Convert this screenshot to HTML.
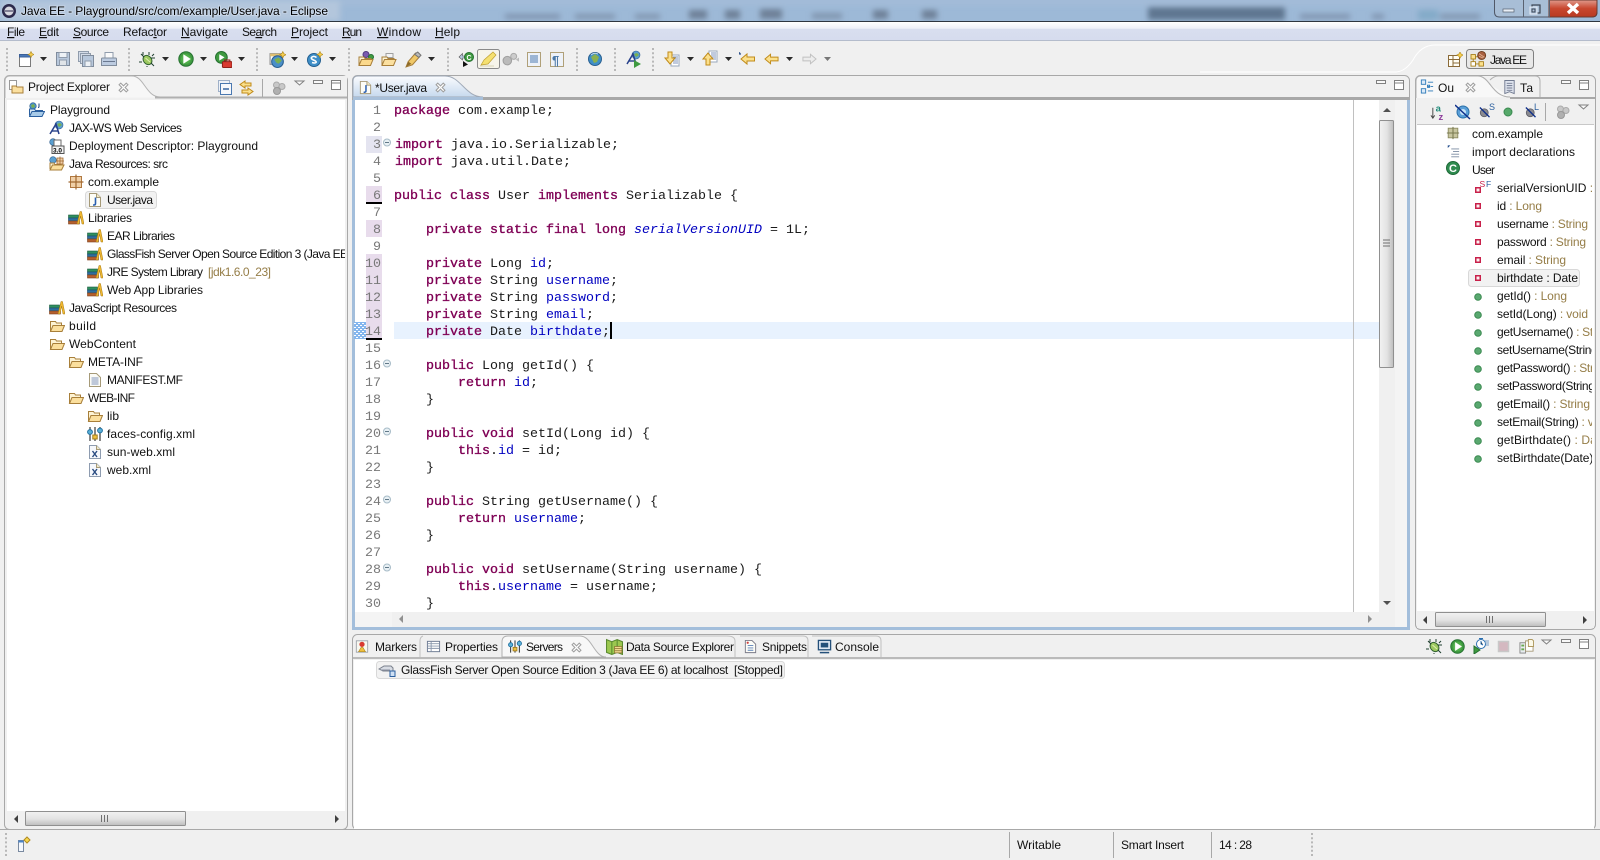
<!DOCTYPE html>
<html><head><meta charset="utf-8"><title>Java EE - Playground/src/com/example/User.java - Eclipse</title>
<style>
html,body{margin:0;padding:0;width:1600px;height:860px;overflow:hidden;background:#f0f0f0}
svg{display:block}
text{font-family:"Liberation Sans",sans-serif;font-size:12px;fill:#111;white-space:pre}
.c text,text.c{font-family:"Liberation Mono",monospace;font-size:13.33px;fill:#1a1a1a}
.k{fill:#7f0055;stroke:#7f0055;stroke-width:.35px}
.f{fill:#0000c0}
.s{fill:#0000c0;font-style:italic}
.n text{font-family:"Liberation Mono",monospace;font-size:13.33px;fill:#787878;text-anchor:end}
.d{fill:#957d47}
.u{text-decoration:underline}
</style></head><body>
<svg xmlns="http://www.w3.org/2000/svg" width="1600" height="860" viewBox="0 0 1600 860">
<defs>
<linearGradient id="menu" x1="0" y1="0" x2="0" y2="1"><stop offset="0" stop-color="#fff"/><stop offset=".35" stop-color="#eef0f8"/><stop offset=".4" stop-color="#d8deef"/><stop offset="1" stop-color="#d6dcee"/></linearGradient>
<linearGradient id="tabb" x1="0" y1="0" x2="0" y2="1"><stop offset="0" stop-color="#fbfcfe"/><stop offset="1" stop-color="#c6d9ee"/></linearGradient>
<linearGradient id="th" x1="0" y1="0" x2="0" y2="1"><stop offset="0" stop-color="#f2f2f2"/><stop offset=".55" stop-color="#e2e2e2"/><stop offset="1" stop-color="#bdbdbd"/></linearGradient>
<linearGradient id="tv" x1="0" y1="0" x2="1" y2="0"><stop offset="0" stop-color="#f2f2f2"/><stop offset=".55" stop-color="#e2e2e2"/><stop offset="1" stop-color="#bdbdbd"/></linearGradient>
<linearGradient id="cl" x1="0" y1="0" x2="0" y2="1"><stop offset="0" stop-color="#e09a8c"/><stop offset=".5" stop-color="#c8472f"/><stop offset="1" stop-color="#b83a22"/></linearGradient>
<filter id="bl"><feGaussianBlur stdDeviation="3"/></filter>
<clipPath id="cpo"><rect x="1417" y="125" width="175" height="485"/></clipPath>
<clipPath id="cpe"><rect x="7" y="100" width="338" height="711"/></clipPath>
<clipPath id="cpc"><rect x="354" y="100" width="1025" height="512"/></clipPath>
<clipPath id="cpt"><rect x="0" y="0" width="1600" height="21"/></clipPath>

<symbol id="folder" viewBox="0 0 16 16"><path d="M1.5 13V3.5h5l1 1.5h5v2.5" fill="#fdf3d4" stroke="#a87f3a"/><path d="M1.5 13.5l2.5-6h11.5l-2.5 6z" fill="#fbdf9d" stroke="#a87f3a"/></symbol>
<symbol id="lib" viewBox="0 0 16 16"><rect x="0.5" y="5" width="10" height="3" fill="#2f8f5f" stroke="#1d5f3f" stroke-width=".6"/><rect x="0.5" y="8" width="10" height="3" fill="#2e6f9f" stroke="#1a4a70" stroke-width=".6"/><rect x="0.5" y="11" width="11" height="3" fill="#b5602e" stroke="#7c3f1c" stroke-width=".6"/><path d="M9 14L12 1.5h1.5L16 14h-2l-1.5-8-1.5 8z" fill="#f0b830" stroke="#a87c18" stroke-width=".5"/></symbol>
<symbol id="jfile" viewBox="0 0 16 16"><path d="M2.5 1.5h7l4 4v9h-11z" fill="#fdfdf7" stroke="#a69a78"/><path d="M9.5 1.5v4h4" fill="#f0e8c8" stroke="#a69a78"/><path d="M8.5 5.5v6q0 1.5-1.5 1.5H6" fill="none" stroke="#2a5fb0" stroke-width="1.6"/></symbol>
<symbol id="xfile" viewBox="0 0 16 16"><path d="M2.5 1.5h7l4 4v9h-11z" fill="#f6f8fc" stroke="#8e9cb0"/><path d="M9.5 1.5v4h4" fill="#f0e8c8" stroke="#a69a78"/><path d="M5.5 7l4.5 6M10 7l-4.5 6" stroke="#284a80" stroke-width="1.4"/></symbol>
<symbol id="mf" viewBox="0 0 16 16"><path d="M2.5 1.5h7l4 4v9h-11z" fill="#fbfbf6" stroke="#a69a78"/><path d="M4.5 6h7M4.5 8h7M4.5 10h7M4.5 12h7" stroke="#8096bc"/></symbol>
<symbol id="pkg" viewBox="0 0 16 16"><rect x="2.5" y="2.5" width="11" height="11" fill="#f0d0a8" stroke="#b07840"/><path d="M8 0.5v15M0.5 8h15" stroke="#a06830" stroke-width="1.2"/></symbol>
<symbol id="proj" viewBox="0 0 16 16"><circle cx="4" cy="4" r="3.3" fill="#4a90c8" stroke="#2f5f90" stroke-width=".6"/><path d="M2 3l3-1 1 3-3 1z" fill="#7ab050"/><path d="M10 1.5v3q0 1-1 1" fill="none" stroke="#1a3f80"/><path d="M0.5 13.5V7h5l1 1.5h7v2" fill="#d8e8f6" stroke="#2a5f9f"/><path d="M0.5 14.5l2.5-5h12.5l-2.5 5z" fill="#a8cbe8" stroke="#2a5f9f"/></symbol>
<symbol id="jax" viewBox="0 0 16 16"><circle cx="10" cy="5" r="4" fill="#5a9fd0" stroke="#2f5f90" stroke-width=".6"/><path d="M8 4l3-1 2 2-3 2z" fill="#7ab050"/><path d="M1 14L7 4l3 10" fill="none" stroke="#27408a" stroke-width="1.5"/><path d="M3 11h6" stroke="#27408a" stroke-width="1.4"/></symbol>
<symbol id="dd" viewBox="0 0 16 16"><circle cx="4" cy="4" r="3.3" fill="#5a9fd0" stroke="#2f5f90" stroke-width=".6"/><rect x="5" y="2" width="7" height="7" fill="#fff" stroke="#6a6a6a"/><rect x="3" y="8" width="12" height="7.5" fill="#f4f4f4" stroke="#555"/><text x="4" y="14.5" style="font:bold 6.5px 'Liberation Sans',sans-serif;fill:#000">3.0</text></symbol>
<symbol id="jres" viewBox="0 0 16 16"><circle cx="4" cy="4" r="3.3" fill="#5a9fd0" stroke="#2f5f90" stroke-width=".6"/><path d="M1 13V7h4l1 1.5h6v2" fill="#fdf3d4" stroke="#a87f3a"/><path d="M1 14l2.5-5H15l-2.5 5z" fill="#fbdf9d" stroke="#a87f3a"/><path d="M8 2h6v6h-6zM11 0.5v8M7 5h8" fill="#f0d0a8" stroke="#a06830" stroke-width=".8"/></symbol>
<symbol id="faces" viewBox="0 0 16 16"><path d="M3 1v14M8 1v14M13 1v14" stroke="#3a3a3a" stroke-width="1.2"/><circle cx="3" cy="6" r="2.4" fill="#5ab0d8" stroke="#1f6f9f"/><rect x="5.8" y="9" width="4.4" height="4" fill="#f0c040" stroke="#a07c18"/><circle cx="13" cy="4.5" r="2.4" fill="#5ab0d8" stroke="#1f6f9f"/></symbol>
<symbol id="debug" viewBox="0 0 16 16"><ellipse cx="8.5" cy="9" rx="4" ry="5" transform="rotate(-40 8.5 9)" fill="#9cc860" stroke="#2f5f2f"/><path d="M5 6L2 3M12 12l3 3M3 11H0M8 15v1M13 5l2-2M10 1v3M12 7h4M4 4V1" stroke="#1f3f2f" stroke-width="1"/><path d="M6.5 7l4.5 4" stroke="#e0f0b0"/></symbol>
<symbol id="run" viewBox="0 0 16 16"><circle cx="8" cy="8" r="7.2" fill="#3f9a40" stroke="#257030"/><circle cx="8" cy="8" r="5" fill="#4fae4a"/><path d="M5.5 3.5L12.5 8l-7 4.5z" fill="#fff" stroke="#e6f5e0" stroke-width=".5"/></symbol>
<symbol id="ext" viewBox="0 0 16 16"><circle cx="6" cy="6" r="5.5" fill="#3f9a40" stroke="#257030"/><path d="M4 3l5 3-5 3z" fill="#fff"/><rect x="7" y="10" width="9" height="5.5" rx="1" fill="#d83a30" stroke="#902018"/><path d="M9 10V8.5h5V10" fill="none" stroke="#902018"/></symbol>
<symbol id="newf" viewBox="0 0 16 16"><rect x="1.5" y="3.5" width="11" height="12" fill="#fff" stroke="#7a7a7a"/><rect x="1.5" y="3.5" width="11" height="2.5" fill="#4a78b8" stroke="#3a5f98"/><path d="M13 0.5l1 2 2 1-2 1-1 2-1-2-2-1 2-1z" fill="#f8d050" stroke="#b08a20" stroke-width=".6"/></symbol>
<symbol id="save" viewBox="0 0 16 16"><rect x="1.5" y="1.5" width="13" height="13" fill="#b8c8dc" stroke="#808c9c"/><rect x="4" y="1.5" width="8" height="5" fill="#eef2f6" stroke="#909cac"/><rect x="4.5" y="9" width="7" height="5.5" fill="#e0e4e8" stroke="#909cac"/></symbol>
<symbol id="saveall" viewBox="0 0 16 16"><rect x="0.5" y="0.5" width="10" height="10" fill="#d4dce8" stroke="#909cac"/><rect x="2.5" y="2.5" width="10" height="10" fill="#d4dce8" stroke="#909cac"/><rect x="4.5" y="4.5" width="11" height="11" fill="#b8c8dc" stroke="#808c9c"/><rect x="7" y="10" width="6" height="5.5" fill="#eef2f6" stroke="#909cac"/></symbol>
<symbol id="print" viewBox="0 0 16 16"><rect x="4" y="1.5" width="8" height="6" fill="#fafafa" stroke="#909cac"/><path d="M0.5 14.5V8q0-1 1-1h13q1 0 1 1v6.5z" fill="#bccbe0" stroke="#808c9c"/><path d="M2 10.5h12" stroke="#6a7890"/></symbol>
<symbol id="web" viewBox="0 0 16 16"><rect x="1" y="2.5" width="11" height="10" fill="#fff" stroke="#888"/><rect x="1" y="2.5" width="11" height="2.5" fill="#e0c070"/><circle cx="8" cy="10" r="5.5" fill="#4a8fc8" stroke="#2a5f90"/><path d="M5 8l4-2 3 3-3 3-2-1z" fill="#7ab050"/><path d="M13 0.5l1 2 2 1-2 1-1 2-1-2-2-1 2-1z" fill="#f8d050" stroke="#b08a20" stroke-width=".6"/></symbol>
<symbol id="news" viewBox="0 0 16 16"><circle cx="7" cy="9" r="6.5" fill="#3f8fc8" stroke="#235f90"/><path d="M9.5 6.5q-2.5-2-4.5-.5t1.5 3 2.5 2.5-4 0" fill="none" stroke="#fff" stroke-width="1.5"/><path d="M13 0.5l1 2 2 1-2 1-1 2-1-2-2-1 2-1z" fill="#f8d050" stroke="#b08a20" stroke-width=".6"/></symbol>
<symbol id="opend" viewBox="0 0 16 16"><circle cx="8" cy="3.5" r="3" fill="#7a5ab0" stroke="#503a80"/><circle cx="13" cy="6" r="2.5" fill="#3f9a40" stroke="#257030"/><path d="M1 14V6h5l1 1.5h6v1" fill="#fdf3d4" stroke="#a87f3a"/><path d="M1 14.5l2.5-6H15l-2.5 6z" fill="#fbd98c" stroke="#a87f3a"/></symbol>
<symbol id="open2" viewBox="0 0 16 16"><rect x="5" y="2.5" width="7" height="4" fill="#f4f4f4" stroke="#a0a0a0"/><path d="M1 14V6h5l1 1.5h6v1" fill="#fdf3d4" stroke="#a87f3a"/><path d="M1 14.5l2.5-6H15l-2.5 6z" fill="#fbe0a0" stroke="#a87f3a"/></symbol>
<symbol id="pen" viewBox="0 0 16 16"><path d="M1 15l2-5 7-8 4 3-7 8z" fill="#f0c868" stroke="#a87f3a"/><path d="M9 3l4 3 2-2-3-3z" fill="#bbb" stroke="#777"/><path d="M1 15l2-5 3 2z" fill="#8c6a2a"/></symbol>
<symbol id="nav" viewBox="0 0 16 16"><path d="M1 6l3.5-3.5V5h5v2h-5v2z" fill="#b8c8e0" stroke="#555" stroke-width=".6"/><circle cx="11" cy="6" r="4.5" fill="#3f9a40" stroke="#257030"/><text x="8.5" y="9" style="font:bold 7px 'Liberation Sans',sans-serif;fill:#fff">C</text><path d="M5 10l5 3.5-5 2.5z" fill="#111"/></symbol>
<symbol id="globe" viewBox="0 0 16 16"><circle cx="8" cy="8" r="6.5" fill="#3f8fc8" stroke="#2a5f90"/><path d="M4 6l4-3 4 3-2 5-3 1z" fill="#8ab050"/><path d="M4 4q3-3 7-1" stroke="#fff" fill="none" stroke-opacity=".7"/></symbol>
<symbol id="nextann" viewBox="0 0 16 16"><rect x="7" y="4" width="8" height="11" fill="#fff" stroke="#9aa8bc"/><path d="M9 6h5M9 8h5M9 10h5M9 12h5" stroke="#8096bc"/><path d="M4 1h4v6h3l-5 6-5-6h3z" fill="#fbe08c" stroke="#c08a18"/></symbol>
<symbol id="prevann" viewBox="0 0 16 16"><rect x="7" y="1" width="8" height="11" fill="#fff" stroke="#9aa8bc"/><path d="M9 3h5M9 5h5M9 7h5M9 9h5" stroke="#8096bc"/><path d="M4 15h4V9h3L6 3 1 9h3z" fill="#fbe08c" stroke="#c08a18"/></symbol>
<symbol id="bk" viewBox="0 0 16 16"><path d="M1 8l6-5v3h8v4H7v3z" fill="#fbe08c" stroke="#c08a18"/></symbol>
<symbol id="bkl" viewBox="0 0 16 16"><path d="M2 8l6-5v3h7.5v4H8v3z" fill="#fbe08c" stroke="#c08a18"/><text x="-1" y="7" style="font:bold 8px 'Liberation Sans',sans-serif;fill:#2a4f8a">*</text></symbol>
<symbol id="fw" viewBox="0 0 16 16"><path d="M15 8L9 3v3H1v4h8v3z" fill="#ececec" stroke="#c0c0c0"/></symbol>
<symbol id="gray" viewBox="0 0 16 16"><circle cx="5.5" cy="5" r="3" fill="#c8c8c8" stroke="#aaa"/><circle cx="11" cy="6.5" r="3" fill="#c8c8c8" stroke="#aaa"/><circle cx="6" cy="11" r="3.5" fill="#b0b0b0" stroke="#999"/></symbol>
<symbol id="grayb" viewBox="0 0 16 16"><circle cx="5" cy="10" r="4" fill="#bbb" stroke="#a0a0a0"/><circle cx="11" cy="6" r="2.8" fill="#ccc" stroke="#aaa"/><path d="M13 9l3-2v4z" fill="#bbb"/></symbol>
<symbol id="collapse" viewBox="0 0 16 16"><rect x="1.5" y="0.5" width="11" height="11" fill="#eef2f8" stroke="#9fb0c8"/><rect x="3.5" y="3.5" width="11" height="11" fill="#f6f8fc" stroke="#4a78b0"/><path d="M6 9h6" stroke="#2a5a9a" stroke-width="1.4"/></symbol>
<symbol id="link" viewBox="0 0 17 16"><path d="M7 1L2 4.5 7 8V6h6V3H7z" fill="#fbe08c" stroke="#c08a18"/><path d="M10 8l5 3.5-5 3.5v-2H4v-3h6z" fill="#fbe08c" stroke="#c08a18"/></symbol>
<symbol id="outl" viewBox="0 0 16 16"><rect x="1.5" y="0.5" width="5" height="5" fill="#dceaf8" stroke="#2a78b8"/><rect x="1.5" y="10.5" width="5" height="5" fill="#dceaf8" stroke="#2a78b8"/><path d="M9 3h6M9 8h2M12 8h3M9 13h6" stroke="#2a78b8"/><rect x="8.5" y="6.5" width="2.5" height="2.5" fill="none" stroke="#2a78b8"/></symbol>
<symbol id="task" viewBox="0 0 16 16"><path d="M3 0.5h10v14l-5-2-5 2z" fill="#dfe4ee" stroke="#707a90"/><path d="M5 3.5h6M5 6h6M5 8.5h6M5 11h6" stroke="#707a90"/></symbol>
<symbol id="openp" viewBox="0 0 16 16"><rect x="1.5" y="3.5" width="11" height="11" fill="#fffdf4" stroke="#8a6a38"/><path d="M1.5 7.5h11M6 3.5v11M6 11h6.5" stroke="#8a6a38"/><path d="M13 0l1.2 2 2 1-2 1.2-1.2 2-1.2-2-2-1.2 2-1z" fill="#f8d050" stroke="#b08a20" stroke-width=".6"/></symbol>
<symbol id="jee" viewBox="0 0 20 18"><rect x="1" y="4" width="5" height="5" fill="#fbe08c" stroke="#a87f18"/><rect x="1" y="12" width="5" height="5" fill="#fff" stroke="#a87f18"/><rect x="10" y="12" width="5" height="5" fill="#fbe08c" stroke="#a87f18"/><path d="M3.5 9v3M6 14.5h4M6 6.5h3" stroke="#a87f18"/><circle cx="13" cy="5" r="4.5" fill="#a86040" stroke="#6a3818"/><path d="M10 3l6 4M10 6l5 2" stroke="#e0b090"/></symbol>
<symbol id="az" viewBox="0 0 18 18"><path d="M3 4v11M1 12l2 3 2-3" fill="none" stroke="#444"/><text x="6" y="8" style="font:bold 10px 'Liberation Sans',sans-serif;fill:#1f8a7a">a</text><text x="9" y="17" style="font:bold 10px 'Liberation Sans',sans-serif;fill:#8a3a9a">z</text></symbol>
<symbol id="hidef" viewBox="0 0 16 16"><circle cx="8" cy="8" r="6" fill="#5a9fd8" stroke="#2a6fa8"/><circle cx="8" cy="8" r="3" fill="#c8e4f8"/><path d="M0 1L15 15" stroke="#10308a" stroke-width="1.5"/></symbol>
<symbol id="hides" viewBox="0 0 16 16"><circle cx="6" cy="10" r="4.5" fill="#8a8a90" stroke="#606068"/><path d="M1 4l11 11" stroke="#10308a" stroke-width="1.5"/></symbol>
<symbol id="mk" viewBox="0 0 16 16"><rect x="1.5" y="1.5" width="13" height="13" fill="#f8f8f0" stroke="#9aa0a8"/><circle cx="8" cy="5.5" r="3" fill="#d83a30"/><path d="M4 14l3-5h2l3 5z" fill="#f0c040" stroke="#a07c18" stroke-width=".6"/></symbol>
<symbol id="props" viewBox="0 0 16 16"><rect x="1.5" y="2.5" width="13" height="11" fill="#fff" stroke="#6a7890"/><path d="M1.5 5h13M1.5 7.5h13M1.5 10h13M5.5 2.5v11" stroke="#8a98ac"/></symbol>
<symbol id="dse" viewBox="0 0 16 16"><path d="M0.5 1.5l5 2 5-2 5 2v12l-5-2-5 2-5-2z" fill="#9cc850" stroke="#5a8a30"/><path d="M5.5 3.5v12M10.5 1.5v12" stroke="#5a8a30"/><path d="M8 8h7v6H8zM8 10h7M8 12h7" fill="#f0d890" stroke="#8a7030" stroke-width=".7"/></symbol>
<symbol id="snip" viewBox="0 0 16 16"><path d="M2.5 1.5h7l4 4v9h-11z" fill="#fdfdf7" stroke="#7a7a88"/><path d="M5 7h6M5 9.5h6M5 12h6" stroke="#5a80b8"/><circle cx="5" cy="4" r="1.2" fill="#d04040"/></symbol>
<symbol id="cons" viewBox="0 0 16 16"><rect x="1.5" y="1.5" width="13" height="10" fill="#dfe8f4" stroke="#24507a" stroke-width="1.4"/><rect x="4" y="4" width="8" height="5" fill="#24507a"/><path d="M3 14.5h10" stroke="#24507a" stroke-width="1.6"/></symbol>
<symbol id="srv" viewBox="0 0 18 16"><path d="M1 7l5-3h7l2 2v3H5z" fill="#d8dce4" stroke="#7a808c"/><path d="M3 8h9" stroke="#8a90a0"/><rect x="12" y="9" width="5" height="5.5" fill="#cfe0f4" stroke="#2a5f9f"/></symbol>
<symbol id="pub" viewBox="0 0 16 16"><circle cx="8" cy="6" r="4.5" fill="#fff" stroke="#2a6fb0"/><path d="M8 3v3l2 1M6 0.5h4" stroke="#2a6fb0"/><path d="M12 3h4M12 5h4M13 7h3" stroke="#7aa0c8"/><path d="M1 8l6 4-6 4z" fill="#3f9a40" stroke="#257030"/></symbol>
<symbol id="pub2" viewBox="0 0 16 16"><rect x="1" y="4" width="6" height="11" fill="#e8ecf0" stroke="#888"/><rect x="2.5" y="6" width="3" height="2" fill="#6aa84f"/><rect x="2.5" y="10" width="3" height="2" fill="#6aa84f"/><path d="M7 2h6l2 2v9H7z" fill="#fff" stroke="#a89a78"/><path d="M10 0.5h4l1.5 1.5v6H10z" fill="#fbf8e8" stroke="#b09a60"/></symbol>
<symbol id="fast" viewBox="0 0 16 16"><rect x="1.5" y="4.5" width="5" height="11" fill="#f4f8fe" stroke="#7a8aa0"/><rect x="1.5" y="4.5" width="5" height="2" fill="#4a84c8"/><path d="M10 1l3 3-3 3-3-3z" fill="#f8d850" stroke="#b08a20"/></symbol>
<symbol id="impd" viewBox="0 0 16 16"><path d="M2 4V1h3z" fill="#1f4a8a"/><path d="M6 5h9M8 8h7M6 11h9M6 14h9" stroke="#7a8aa0"/></symbol>
<symbol id="pko" viewBox="0 0 16 16"><rect x="2.5" y="2.5" width="11" height="11" fill="#c8c6a0" stroke="#8a8a60"/><path d="M8 1v14M1 8h14" stroke="#7a7a50" stroke-width="1.2"/></symbol>
<symbol id="x" viewBox="0 0 10 10"><path d="M1 2.5L2.5 1 5 3.5 7.5 1 9 2.5 6.5 5 9 7.5 7.5 9 5 6.5 2.5 9 1 7.5 3.5 5z" fill="#fff" stroke="#a0a0a0"/></symbol>
</defs>

<!-- title bar -->
<rect x="0" y="0" width="1600" height="22" fill="#9db9d7"/>
<g clip-path="url(#cpt)">
<g filter="url(#bl)">
<rect x="0" y="0" width="340" height="21" fill="#b3c6dc"/>
<rect x="340" y="0" width="1160" height="4" fill="#a7bdd8"/>
<rect x="505" y="14" width="55" height="5" fill="#7f93ae"/>
<rect x="575" y="14" width="40" height="5" fill="#8094ae"/>
<rect x="635" y="14" width="25" height="5" fill="#8094ae"/>
<rect x="689" y="10" width="18" height="9" fill="#6e8097"/>
<rect x="725" y="10" width="15" height="9" fill="#6e8097"/>
<rect x="760" y="9" width="22" height="10" fill="#6e8097"/>
<rect x="812" y="13" width="30" height="6" fill="#8094ae"/>
<rect x="873" y="10" width="15" height="9" fill="#6e8097"/>
<rect x="922" y="10" width="15" height="9" fill="#6e8097"/>
<rect x="1148" y="7" width="137" height="13" fill="#5f7690"/>
<rect x="1300" y="14" width="50" height="5" fill="#7f93ae"/>
<rect x="1372" y="14" width="12" height="5" fill="#7f93ae"/>
<rect x="1418" y="10" width="20" height="10" fill="#83aac8"/>
<rect x="1440" y="14" width="40" height="5" fill="#8094ae"/>
</g>
</g>
<path d="M1494.5 0V12q0 5 5 5H1592q5 0 5-5V0" fill="#a8bed6" stroke="#505868"/>
<path d="M1549 0h48V12q0 5-5 5h-43z" fill="url(#cl)" stroke="#6a3a30"/>
<path d="M1523.5 0v17M1549.5 0v17" stroke="#5a6270"/>
<rect x="1503" y="9" width="11" height="3" fill="#e8eef6" stroke="#56606e" stroke-width=".7"/>
<rect x="1532" y="5" width="8" height="8" fill="none" stroke="#3a4452" stroke-width="1.2"/><rect x="1530" y="7" width="7" height="7" fill="#b0c4dc" stroke="#e8eef6"/><rect x="1532" y="9" width="3" height="3" fill="none" stroke="#3a4452"/>
<path d="M1568 4l10 9M1578 4l-10 9" stroke="#fff" stroke-width="3.4"/>
<circle cx="9" cy="11" r="7" fill="#2c2a4c"/><circle cx="9" cy="11" r="4.5" fill="#d8d8e0"/><path d="M5 11h8" stroke="#2c2a4c" stroke-width="1"/>
<text x="21" y="15" textLength="307" lengthAdjust="spacing" style="fill:#000;paint-order:stroke;stroke:#d8e4f0;stroke-width:2px;stroke-opacity:.55">Java EE - Playground/src/com/example/User.java - Eclipse</text>
<rect x="0" y="21" width="1600" height="1" fill="#2e3640"/>

<!-- menu -->
<rect x="0" y="22" width="1600" height="18" fill="url(#menu)"/>
<rect x="0" y="40" width="1600" height="1" fill="#b4bccc"/>
<g>
<text x="7" y="36" textLength="18"><tspan class="u">F</tspan>ile</text>
<text x="39" y="36" textLength="20"><tspan class="u">E</tspan>dit</text>
<text x="73" y="36" textLength="36"><tspan class="u">S</tspan>ource</text>
<text x="123" y="36" textLength="44">Refac<tspan class="u">t</tspan>or</text>
<text x="181" y="36" textLength="47"><tspan class="u">N</tspan>avigate</text>
<text x="242" y="36" textLength="35">Se<tspan class="u">a</tspan>rch</text>
<text x="291" y="36" textLength="37"><tspan class="u">P</tspan>roject</text>
<text x="342" y="36" textLength="20"><tspan class="u">R</tspan>un</text>
<text x="377" y="36" textLength="44"><tspan class="u">W</tspan>indow</text>
<text x="435" y="36" textLength="25"><tspan class="u">H</tspan>elp</text>
</g>

<!-- toolbar -->
<rect x="0" y="41" width="1600" height="34" fill="#f0f0f0"/>
<g stroke="#b8b8b8" stroke-width="2" stroke-dasharray="2 2.2" fill="none">
<path d="M7 48v23M129 48v23M257 48v23M349 48v23M448 48v23M577 48v23M615 48v23M653 48v23"/>
</g>
<use href="#newf" x="18" y="51" width="16" height="16"/>
<use href="#save" x="55" y="51" width="16" height="16"/>
<use href="#saveall" x="78" y="51" width="16" height="16"/>
<use href="#print" x="101" y="51" width="16" height="16"/>
<use href="#debug" x="139" y="51" width="16" height="16"/>
<use href="#run" x="178" y="51" width="16" height="16"/>
<use href="#ext" x="215" y="51" width="17" height="17"/>
<use href="#web" x="269" y="51" width="17" height="17"/>
<use href="#news" x="307" y="51" width="16" height="16"/>
<use href="#opend" x="358" y="51" width="16" height="16"/>
<use href="#open2" x="381" y="51" width="16" height="16"/>
<use href="#pen" x="405" y="51" width="17" height="17"/>
<use href="#nav" x="458" y="51" width="16" height="16"/>
<rect x="477.5" y="49.5" width="22" height="19" rx="2" fill="#f6f4ea" stroke="#8a8a8a"/>
<path d="M481 65l3-5 9-8 3 3-8 9z" fill="#f5e070" stroke="#c0a030" stroke-width=".7"/><path d="M480 66h14" stroke="#d8d4b8"/>
<use href="#grayb" x="502" y="50" width="17" height="17"/>
<rect x="527.5" y="52.5" width="13" height="14" fill="#eef2f8" stroke="#b0a078"/><path d="M530 56h8M530 58h8M530 60h8M530 62h8" stroke="#4a78b0"/>
<rect x="550.5" y="52.5" width="13" height="14" fill="#eef2f8" stroke="#b0a078"/><text x="552" y="65" style="font:bold 13px 'Liberation Sans',sans-serif;fill:#4a78a8">¶</text>
<use href="#globe" x="587" y="51" width="16" height="16"/>
<use href="#jax" x="626" y="50" width="16" height="16"/><path d="M634 60l7 4-7 4z" fill="#3f9a40"/>
<use href="#nextann" x="664" y="51" width="16" height="16"/>
<use href="#prevann" x="702" y="50" width="16" height="16"/>
<use href="#bkl" x="739" y="51" width="16" height="16"/>
<use href="#bk" x="764" y="51" width="15" height="16"/>
<use href="#fw" x="802" y="51" width="15" height="16"/>
<g fill="#2a2a2a">
<path d="M40 57h7l-3.5 4zM162 57h7l-3.5 4zM200 57h7l-3.5 4zM238 57h7l-3.5 4zM291 57h7l-3.5 4zM329 57h7l-3.5 4zM428 57h7l-3.5 4zM687 57h7l-3.5 4zM725 57h7l-3.5 4zM786 57h7l-3.5 4z"/>
<path d="M824 57h7l-3.5 4z" fill="#777"/>
</g>
<!-- perspective -->
<path d="M1200 72H1395q10 0 18-12q8-15 22-15H1600" fill="none" stroke="#fff" stroke-width="1"/>
<use href="#openp" x="1447" y="52" width="16" height="16"/>
<rect x="1466.5" y="49.5" width="67" height="19" rx="3" fill="#e8e8e8" stroke="#808080"/>
<use href="#jee" x="1470" y="51" width="18" height="16"/>
<text x="1490" y="64" textLength="37">Java EE</text>

<!-- project explorer -->
<rect x="4.5" y="75.5" width="343" height="754" rx="5" fill="#f0f0f0" stroke="#a8a8a8"/>
<path d="M5 98V81q0-5 5-5H132c12 0 14 21 28 21H347" fill="#f7f7f7" stroke="#b4b4b4"/>
<rect x="160" y="76" width="187" height="21" fill="#f0f0f0"/>
<path d="M155 97.5H347" stroke="#b0b0b0" stroke-width="2"/>
<rect x="7" y="100" width="338" height="711" fill="#fff"/>
<g><path d="M10 84h5l1 1.5v-4h-6z" fill="#fff"/><rect x="9.5" y="80.5" width="7" height="9" fill="#fff" stroke="#999"/><path d="M12 89V86h4l1 1h6v6H12z" fill="#fbe0a0" stroke="#a87f3a"/></g>
<text x="28" y="91" textLength="82">Project Explorer</text>
<use href="#x" x="118" y="82" width="11" height="11"/>
<use href="#collapse" x="217" y="80" width="16" height="16"/>
<use href="#link" x="238" y="80" width="17" height="16"/>
<path d="M262.5 79v18" stroke="#a8a8a8"/>
<use href="#gray" x="271" y="80" width="16" height="16"/>
<path d="M295 81h9l-4.5 4z" fill="#f8f8f8" stroke="#808080"/>
<rect x="313.5" y="80.5" width="9" height="3" fill="#f8f8f8" stroke="#808080"/>
<rect x="331.5" y="80.5" width="9" height="9" fill="#fff" stroke="#808080"/><path d="M331 83h10" stroke="#808080"/>

<g clip-path="url(#cpe)">
<rect x="85.5" y="191.5" width="71" height="17" rx="3" fill="#f2f2f2" stroke="#d8d8d8"/>
<use href="#proj" x="29" y="102" width="16" height="16"/><text x="50" y="114" textLength="60">Playground</text>
<use href="#jax" x="49" y="120" width="16" height="16"/><text x="69" y="132" textLength="113">JAX-WS Web Services</text>
<use href="#dd" x="49" y="138" width="16" height="16"/><text x="69" y="150" textLength="189">Deployment Descriptor: Playground</text>
<use href="#jres" x="49" y="156" width="16" height="16"/><text x="69" y="168" textLength="99">Java Resources: src</text>
<use href="#pkg" x="68" y="174" width="16" height="16"/><text x="88" y="186" textLength="71">com.example</text>
<use href="#jfile" x="87" y="192" width="16" height="16"/><text x="107" y="204" textLength="46">User.java</text>
<use href="#lib" x="68" y="210" width="16" height="16"/><text x="88" y="222" textLength="44">Libraries</text>
<use href="#lib" x="87" y="228" width="16" height="16"/><text x="107" y="240" textLength="68">EAR Libraries</text>
<use href="#lib" x="87" y="246" width="16" height="16"/><text x="107" y="258" textLength="241">GlassFish Server Open Source Edition 3 (Java EE</text>
<use href="#lib" x="87" y="264" width="16" height="16"/><text x="107" y="276" textLength="96">JRE System Library</text><text x="208" y="276" textLength="63" class="d">[jdk1.6.0_23]</text>
<use href="#lib" x="87" y="282" width="16" height="16"/><text x="107" y="294" textLength="96">Web App Libraries</text>
<use href="#lib" x="49" y="300" width="16" height="16"/><text x="69" y="312" textLength="108">JavaScript Resources</text>
<use href="#folder" x="49" y="318" width="16" height="16"/><text x="69" y="330" textLength="27">build</text>
<use href="#folder" x="49" y="336" width="16" height="16"/><text x="69" y="348" textLength="67">WebContent</text>
<use href="#folder" x="68" y="354" width="16" height="16"/><text x="88" y="366" textLength="55">META-INF</text>
<use href="#mf" x="87" y="372" width="16" height="16"/><text x="107" y="384" textLength="76">MANIFEST.MF</text>
<use href="#folder" x="68" y="390" width="16" height="16"/><text x="88" y="402" textLength="47">WEB-INF</text>
<use href="#folder" x="87" y="408" width="16" height="16"/><text x="107" y="420" textLength="12">lib</text>
<use href="#faces" x="87" y="426" width="16" height="16"/><text x="107" y="438" textLength="88">faces-config.xml</text>
<use href="#xfile" x="87" y="444" width="16" height="16"/><text x="107" y="456" textLength="68">sun-web.xml</text>
<use href="#xfile" x="87" y="462" width="16" height="16"/><text x="107" y="474" textLength="44">web.xml</text>
</g>
<rect x="7" y="811" width="338" height="16" fill="#f0f0f0"/>
<rect x="25.5" y="811.5" width="160" height="14" rx="1" fill="url(#th)" stroke="#909090"/>
<path d="M101.5 815v7M104.5 815v7M107.5 815v7" stroke="#707070"/>
<path d="M18 815v8l-4-4z" fill="#404040"/><path d="M335 815v8l4-4z" fill="#404040"/>

<!-- editor -->
<rect x="352.5" y="75.5" width="1057" height="553" rx="5" fill="#f0f0f0" stroke="#a8a8a8"/>
<path d="M353 97V81q0-5 5-5H445c16 0 20 21 38 21z" fill="url(#tabb)" stroke="#a0aab8"/>
<path d="M483 98.5H1409" stroke="#a8a8a8" stroke-width="3"/>
<path d="M353 98.5H483" stroke="#a8c0da" stroke-width="3"/>
<rect x="352" y="100" width="3" height="530" fill="#a3bedb"/>
<rect x="1407" y="100" width="3" height="530" fill="#a3bedb"/>
<rect x="352" y="627" width="1058" height="3" fill="#a3bedb"/>
<rect x="355" y="100" width="1052" height="527" fill="#fff"/>
<use href="#jfile" x="358" y="80" width="15" height="15"/>
<text x="375" y="92" textLength="52">*User.java</text>
<use href="#x" x="435" y="82" width="11" height="11"/>
<rect x="1376.5" y="80.5" width="9" height="3" fill="#f8f8f8" stroke="#808080"/>
<rect x="1394.5" y="80.5" width="9" height="9" fill="#fff" stroke="#808080"/><path d="M1394 83h10" stroke="#808080"/>

<!-- gutter -->
<rect x="366" y="136" width="16" height="17" fill="#e4e4f0"/>
<rect x="366" y="186" width="16" height="17" fill="#e8dcec"/>
<rect x="366" y="220" width="16" height="17" fill="#e8dcec"/>
<rect x="366" y="254" width="16" height="85" fill="#e8dcec"/>
<rect x="366" y="202" width="16" height="2" fill="#000"/>
<rect x="366" y="338" width="16" height="2" fill="#000"/>
<rect x="354" y="322" width="12" height="17" fill="#84b6ee"/>
<g fill="#fff"><path d="M354 323h2v1h-2zM356 325h2v1h-2zM358 323h2v1h-2zM360 325h2v1h-2zM362 323h2v1h-2zM364 325h2v1h-2zM354 327h2v1h-2zM356 329h2v1h-2zM358 327h2v1h-2zM360 329h2v1h-2zM362 327h2v1h-2zM364 329h2v1h-2zM354 331h2v1h-2zM356 333h2v1h-2zM358 331h2v1h-2zM360 333h2v1h-2zM362 331h2v1h-2zM364 333h2v1h-2zM354 335h2v1h-2zM356 337h2v1h-2zM358 335h2v1h-2zM360 337h2v1h-2zM362 335h2v1h-2zM364 337h2v1h-2z"/></g>
<g class="n">
<text x="381" y="114">1</text><text x="381" y="131">2</text><text x="381" y="148">3</text><text x="381" y="165">4</text><text x="381" y="182">5</text><text x="381" y="199">6</text><text x="381" y="216">7</text><text x="381" y="233">8</text><text x="381" y="250">9</text><text x="381" y="267">10</text><text x="381" y="284">11</text><text x="381" y="301">12</text><text x="381" y="318">13</text><text x="381" y="335">14</text><text x="381" y="352">15</text><text x="381" y="369">16</text><text x="381" y="386">17</text><text x="381" y="403">18</text><text x="381" y="420">19</text><text x="381" y="437">20</text><text x="381" y="454">21</text><text x="381" y="471">22</text><text x="381" y="488">23</text><text x="381" y="505">24</text><text x="381" y="522">25</text><text x="381" y="539">26</text><text x="381" y="556">27</text><text x="381" y="573">28</text><text x="381" y="590">29</text><text x="381" y="607">30</text>
</g>
<g fill="#e8f0f4" stroke="#a8bcc8">
<circle cx="387" cy="142.5" r="3.5"/><circle cx="387" cy="363.5" r="3.5"/><circle cx="387" cy="431.5" r="3.5"/><circle cx="387" cy="499.5" r="3.5"/><circle cx="387" cy="567.5" r="3.5"/>
</g>
<path d="M385 142.5h4M385 363.5h4M385 431.5h4M385 499.5h4M385 567.5h4" stroke="#607888"/>
<rect x="394" y="322" width="985" height="17" fill="#e8f2fe"/>
<rect x="1353" y="100" width="1" height="512" fill="#c0c0c0"/>
<g class="c" clip-path="url(#cpc)">
<text x="394" y="114" xml:space="preserve"><tspan class="k">package</tspan> com.example;</text>
<text x="395" y="148" xml:space="preserve"><tspan class="k">import</tspan> java.io.Serializable;</text>
<text x="395" y="165" xml:space="preserve"><tspan class="k">import</tspan> java.util.Date;</text>
<text x="394" y="199" xml:space="preserve"><tspan class="k">public</tspan> <tspan class="k">class</tspan> User <tspan class="k">implements</tspan> Serializable {</text>
<text x="426" y="233" xml:space="preserve"><tspan class="k">private</tspan> <tspan class="k">static</tspan> <tspan class="k">final</tspan> <tspan class="k">long</tspan> <tspan class="s">serialVersionUID</tspan> = 1L;</text>
<text x="426" y="267" xml:space="preserve"><tspan class="k">private</tspan> Long <tspan class="f">id</tspan>;</text>
<text x="426" y="284" xml:space="preserve"><tspan class="k">private</tspan> String <tspan class="f">username</tspan>;</text>
<text x="426" y="301" xml:space="preserve"><tspan class="k">private</tspan> String <tspan class="f">password</tspan>;</text>
<text x="426" y="318" xml:space="preserve"><tspan class="k">private</tspan> String <tspan class="f">email</tspan>;</text>
<text x="426" y="335" xml:space="preserve"><tspan class="k">private</tspan> Date <tspan class="f">birthdate</tspan>;</text>
<text x="426" y="369" xml:space="preserve"><tspan class="k">public</tspan> Long getId() {</text>
<text x="458" y="386" xml:space="preserve"><tspan class="k">return</tspan> <tspan class="f">id</tspan>;</text>
<text x="426" y="403">}</text>
<text x="426" y="437" xml:space="preserve"><tspan class="k">public</tspan> <tspan class="k">void</tspan> setId(Long id) {</text>
<text x="458" y="454" xml:space="preserve"><tspan class="k">this</tspan>.<tspan class="f">id</tspan> = id;</text>
<text x="426" y="471">}</text>
<text x="426" y="505" xml:space="preserve"><tspan class="k">public</tspan> String getUsername() {</text>
<text x="458" y="522" xml:space="preserve"><tspan class="k">return</tspan> <tspan class="f">username</tspan>;</text>
<text x="426" y="539">}</text>
<text x="426" y="573" xml:space="preserve"><tspan class="k">public</tspan> <tspan class="k">void</tspan> setUsername(String username) {</text>
<text x="458" y="590" xml:space="preserve"><tspan class="k">this</tspan>.<tspan class="f">username</tspan> = username;</text>
<text x="426" y="607">}</text>
</g>
<rect x="610" y="322" width="2" height="17" fill="#000"/>
<!-- editor scrollbars -->
<rect x="1379" y="100" width="16" height="512" fill="#f0f0f0"/>
<rect x="1395" y="100" width="12" height="527" fill="#f4f4f4"/>
<rect x="392" y="612" width="1003" height="15" fill="#f0f0f0"/>
<rect x="355" y="612" width="37" height="15" fill="#f4f4f4"/>
<rect x="1379.5" y="120.5" width="14" height="247" rx="1" fill="url(#tv)" stroke="#909090"/>
<path d="M1383 240h7M1383 243h7M1383 246h7" stroke="#707070"/>
<path d="M1383 112h8l-4-4z" fill="#505050"/><path d="M1383 601h8l-4 4z" fill="#505050"/>
<path d="M403 615v8l-4-4z" fill="#909090"/><path d="M1368 615v8l4-4z" fill="#909090"/>

<!-- outline -->
<rect x="1415.5" y="75.5" width="180" height="554" rx="5" fill="#f0f0f0" stroke="#a8a8a8"/>
<path d="M1416 98V81q0-5 5-5H1478c12 0 14 21 32 21" fill="#f8f8f8" stroke="#b0b0b0"/>
<path d="M1490 80q4-4 8-4H1535q5 0 5 5v16" fill="#f0f0f0" stroke="#b0b0b0"/>
<path d="M1480 78c10 0 14 19 30 19z" fill="#f8f8f8"/>
<path d="M1478 76c12 0 14 21 32 21" fill="none" stroke="#b0b0b0"/>
<path d="M1510 98H1595" stroke="#a8a8a8" stroke-width="2"/>
<rect x="1417" y="125" width="177" height="486" fill="#fff"/>
<path d="M1417 124.5H1594" stroke="#c8c8c8"/>
<use href="#outl" x="1420" y="79" width="14" height="15"/>
<text x="1438" y="92" textLength="16">Ou</text>
<use href="#x" x="1465" y="82" width="11" height="11"/>
<use href="#task" x="1502" y="80" width="15" height="15"/>
<text x="1520" y="92" textLength="13">Ta</text>
<rect x="1561.5" y="80.5" width="9" height="3" fill="#f8f8f8" stroke="#808080"/>
<rect x="1579.5" y="80.5" width="9" height="9" fill="#fff" stroke="#808080"/><path d="M1579 83h10" stroke="#808080"/>
<use href="#az" x="1430" y="104" width="17" height="17"/>
<use href="#hidef" x="1455" y="104" width="16" height="16"/>
<use href="#hides" x="1479" y="104" width="14" height="14"/><text x="1489" y="110" style="font-size:9px;fill:#2a5f9f">S</text>
<circle cx="1508" cy="112" r="4" fill="#56a86a" stroke="#3a8a50"/>
<use href="#hides" x="1525" y="104" width="14" height="14"/><text x="1534" y="110" style="font-size:9px;fill:#2a5f9f">L</text>
<path d="M1545.5 103v18" stroke="#a8a8a8"/>
<use href="#gray" x="1555" y="104" width="16" height="16"/>
<path d="M1579 105h9l-4.5 4z" fill="#f8f8f8" stroke="#808080"/>

<rect x="1468.5" y="269.5" width="111" height="17" rx="3" fill="#f2f2f2" stroke="#d8d8d8"/>
<use href="#pko" x="1446" y="126" width="14" height="14"/>
<use href="#impd" x="1446" y="144" width="14" height="15"/>
<circle cx="1453" cy="168" r="6.5" fill="#2e8b4f" stroke="#1f6a38"/><text x="1449" y="172" style="font:bold 11px 'Liberation Sans',sans-serif;fill:#fff">C</text>
<g clip-path="url(#cpo)">
<text x="1472" y="138" textLength="71">com.example</text>
<text x="1472" y="156" textLength="103">import declarations</text>
<text x="1472" y="174" textLength="23">User</text>
<text x="1497" y="192">serialVersionUID<tspan class="d"> : long</tspan></text>
<text x="1497" y="210" textLength="45">id<tspan class="d"> : Long</tspan></text>
<text x="1497" y="228" textLength="91">username<tspan class="d"> : String</tspan></text>
<text x="1497" y="246" textLength="89">password<tspan class="d"> : String</tspan></text>
<text x="1497" y="264" textLength="69">email<tspan class="d"> : String</tspan></text>
<text x="1497" y="282" textLength="81">birthdate<tspan style="fill:#111"> : Date</tspan></text>
<text x="1497" y="300" textLength="70">getId()<tspan class="d"> : Long</tspan></text>
<text x="1497" y="318" textLength="91">setId(Long)<tspan class="d"> : void</tspan></text>
<text x="1497" y="336" textLength="115">getUsername()<tspan class="d"> : String</tspan></text>
<text x="1497" y="354" textLength="134">setUsername(String)<tspan class="d"> : void</tspan></text>
<text x="1497" y="372" textLength="112">getPassword()<tspan class="d"> : String</tspan></text>
<text x="1497" y="390" textLength="131">setPassword(String)<tspan class="d"> : void</tspan></text>
<text x="1497" y="408" textLength="93">getEmail()<tspan class="d"> : String</tspan></text>
<text x="1497" y="426" textLength="112">setEmail(String)<tspan class="d"> : void</tspan></text>
<text x="1497" y="444" textLength="110">getBirthdate()<tspan class="d"> : Date</tspan></text>
<text x="1497" y="462" textLength="128">setBirthdate(Date)<tspan class="d"> : void</tspan></text>
</g>
<g fill="#fdf0f0" stroke="#c8204a" stroke-width="1.5">
<rect x="1475.75" y="187.75" width="4.5" height="4.5"/>
<rect x="1475.75" y="203.75" width="4.5" height="4.5"/><rect x="1475.75" y="221.75" width="4.5" height="4.5"/><rect x="1475.75" y="239.75" width="4.5" height="4.5"/><rect x="1475.75" y="257.75" width="4.5" height="4.5"/><rect x="1475.75" y="275.75" width="4.5" height="4.5"/>
</g>
<text x="1479.5" y="187" style="font-size:8.5px;fill:#c8204a">S</text><text x="1486" y="187" style="font-size:8.5px;fill:#2a5f9f">F</text>
<g fill="#5aa870" stroke="#3a8a50">
<circle cx="1478" cy="297" r="3.3"/><circle cx="1478" cy="315" r="3.3"/><circle cx="1478" cy="333" r="3.3"/><circle cx="1478" cy="351" r="3.3"/><circle cx="1478" cy="369" r="3.3"/><circle cx="1478" cy="387" r="3.3"/><circle cx="1478" cy="405" r="3.3"/><circle cx="1478" cy="423" r="3.3"/><circle cx="1478" cy="441" r="3.3"/><circle cx="1478" cy="459" r="3.3"/>
</g>
<rect x="1417" y="611" width="177" height="17" fill="#f0f0f0"/>
<rect x="1435.5" y="612.5" width="110" height="14" rx="1" fill="url(#th)" stroke="#909090"/>
<path d="M1486.5 616v7M1489.5 616v7M1492.5 616v7" stroke="#707070"/>
<path d="M1427 616v8l-4-4z" fill="#404040"/><path d="M1583 616v8l4-4z" fill="#404040"/>

<!-- bottom panel -->
<rect x="352.5" y="634.5" width="1243" height="195" rx="5" fill="#f0f0f0" stroke="#a8a8a8"/>
<path d="M353 658H1595" stroke="#a8a8a8" stroke-width="1.5"/>
<rect x="354" y="660" width="1240" height="169" fill="#fff"/>
<path d="M502 657V642q0-6 6-6H580c12 0 14 21 26 21z" fill="#f8f8f8" stroke="#b0b0b0"/>
<path d="M420 657V641q0-4 3-5M735 657V641q0-5-8-5H610M808 657V641q0-5-5-5H740M881 657V641q0-5-5-5H812" fill="none" stroke="#c0c0c0"/>
<use href="#mk" x="355" y="639" width="14" height="15"/><text x="375" y="651" textLength="42">Markers</text>
<use href="#props" x="426" y="639" width="15" height="15"/><text x="445" y="651" textLength="53">Properties</text>
<use href="#faces" x="508" y="639" width="14" height="15"/><text x="526" y="651" textLength="37">Servers</text>
<use href="#x" x="571" y="642" width="11" height="11"/>
<use href="#dse" x="606" y="638" width="17" height="17"/><text x="626" y="651" textLength="108">Data Source Explorer</text>
<use href="#snip" x="743" y="639" width="15" height="15"/><text x="762" y="651" textLength="45">Snippets</text>
<use href="#cons" x="817" y="639" width="15" height="15"/><text x="835" y="651" textLength="44">Console</text>
<use href="#debug" x="1426" y="638" width="16" height="16"/>
<use href="#run" x="1450" y="639" width="15" height="15"/>
<use href="#pub" x="1473" y="638" width="16" height="16"/>
<rect x="1498.5" y="641.5" width="10" height="10" fill="#d4b8c0" stroke="#c8c8c8" stroke-width="1.5"/>
<use href="#pub2" x="1519" y="639" width="15" height="15"/>
<path d="M1542 640h9l-4.5 4z" fill="#f8f8f8" stroke="#808080"/>
<rect x="1561.5" y="639.5" width="9" height="3" fill="#f8f8f8" stroke="#808080"/>
<rect x="1579.5" y="639.5" width="9" height="9" fill="#fff" stroke="#808080"/><path d="M1579 642h10" stroke="#808080"/>
<rect x="376.5" y="661.5" width="408" height="17" rx="3" fill="#f2f2f2" stroke="#d8d8d8"/>
<use href="#srv" x="378" y="662" width="18" height="16"/>
<text x="401" y="674" textLength="382" xml:space="preserve">GlassFish Server Open Source Edition 3 (Java EE 6) at localhost  [Stopped]</text>

<!-- status bar -->
<rect x="0" y="830" width="1600" height="30" fill="#f0f0f0"/>
<path d="M0 829.5H1600" stroke="#a8a8a8"/>
<path d="M6 833v23M1312 833v23" stroke="#b8b8b8" stroke-width="2" stroke-dasharray="2 2.2"/>
<use href="#fast" x="17" y="836" width="16" height="16"/>
<path d="M1009.5 832v26M1113.5 832v26M1211.5 832v26" stroke="#a8a8a8"/>
<text x="1017" y="849" textLength="44">Writable</text>
<text x="1121" y="849" textLength="63">Smart Insert</text>
<text x="1219" y="849" textLength="33">14 : 28</text>
</svg>
</body></html>
